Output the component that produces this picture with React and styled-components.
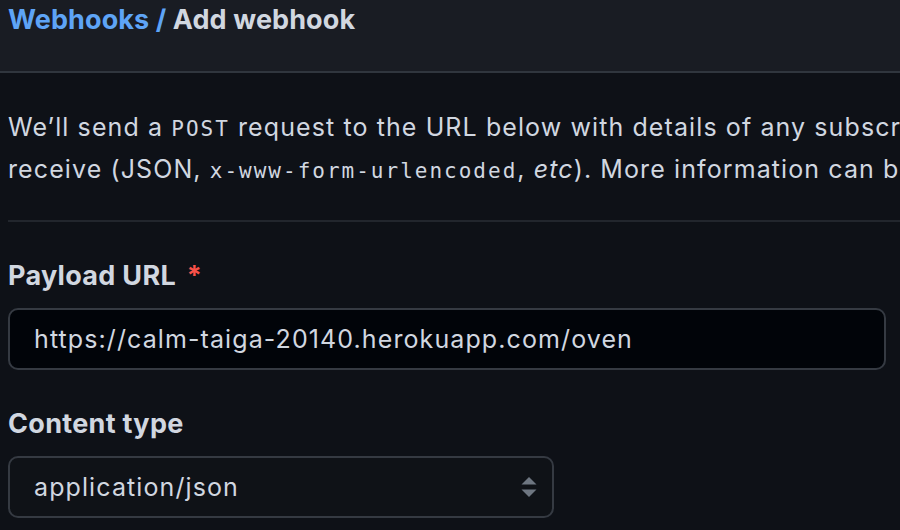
import styled, { createGlobalStyle } from "styled-components";

const GlobalStyle = createGlobalStyle`
    html, body {
        margin: 0;
        padding: 0;
        background-color: #0e1117;
        overflow: hidden;
    }
    body {
        width: 900px;
        height: 530px;
        font-family: Inter, "Liberation Sans", sans-serif;
        color: #d1d7e0;
    }
`;

export default function App() {
    return (
        <>
            <GlobalStyle />
            <Page>
                <Header>
                    <Title>
                        <Crumb>Webhooks /</Crumb> Add webhook
                    </Title>
                </Header>
                <Body>
                    <Intro>
                        We’ll send a <Code>POST</Code> request to the URL below with details of any subscribed events. You can also specify which data format you’d like to
                        <br />
                        receive (JSON, <Code>x-www-form-urlencoded</Code>, <em>etc</em>). More information can be found in our developer documentation.
                    </Intro>
                    <Divider />
                    <Field $top={37}>
                        <Label>
                            Payload URL <Required>*</Required>
                        </Label>
                        <TextInput readOnly value="https://calm-taiga-20140.herokuapp.com/oven" />
                    </Field>
                    <Field $top={37}>
                        <Label>Content type</Label>
                        <SelectBox>
                            <span>application/json</span>
                            <svg width="16" height="22" viewBox="0 0 16 22">
                                <path d="M8 0 L15.5 7.5 L0.5 7.5 Z" fill="#6e7681" />
                                <path d="M8 20 L15.5 12.5 L0.5 12.5 Z" fill="#6e7681" />
                            </svg>
                        </SelectBox>
                    </Field>
                </Body>
            </Page>
        </>
    );
}

const Page = styled.div`
    width: 900px;
    height: 530px;
    overflow: hidden;
`;

const Header = styled.div`
    height: 73px;
    background-color: #191c23;
    border-bottom: 2px solid #30363e;
    padding: 3px 8px 0 8px;
    box-sizing: border-box;
`;

const Title = styled.h1`
    margin: 0;
    font-size: 27px;
    line-height: 34px;
    font-weight: 700;
    letter-spacing: 0.1px;
    color: #d1d7e0;
    white-space: nowrap;
`;

const Crumb = styled.span`
    color: #5ea4f6;
`;

const Body = styled.div`
    padding: 34px 0 0 8px;
`;

const Intro = styled.p`
    margin: 0;
    font-size: 25px;
    line-height: 40px;
    letter-spacing: 1.1px;
    white-space: nowrap;
    color: #d1d7e0;
    em {
        font-style: italic;
    }
`;

const Code = styled.code`
    font-family: "DejaVu Sans Mono", "Liberation Mono", monospace;
    font-size: 21px;
    letter-spacing: 2px;
`;

const Divider = styled.hr`
    border: none;
    height: 2px;
    background-color: #22262d;
    margin: 29px 0 0 0;
`;

const Field = styled.div`
    display: flex;
    flex-direction: column;
    padding-top: ${(props) => props.$top}px;
`;

const Label = styled.label`
    font-size: 27px;
    line-height: 34px;
    font-weight: 700;
    letter-spacing: 0.3px;
    color: #d1d7e0;
    margin-bottom: 15px;
`;

const Required = styled.span`
    color: #f85149;
    margin-left: 4px;
`;

const TextInput = styled.input`
    width: 878px;
    height: 62px;
    box-sizing: border-box;
    background-color: #010409;
    border: 2px solid #353a42;
    border-radius: 10px;
    padding: 0 24px;
    font-family: Inter, "Liberation Sans", sans-serif;
    font-size: 25px;
    letter-spacing: 1.1px;
    color: #d1d7e0;
    outline: none;
`;

const SelectBox = styled.div`
    width: 546px;
    height: 62px;
    box-sizing: border-box;
    display: flex;
    align-items: center;
    justify-content: space-between;
    background-color: #0f1217;
    border: 2px solid #353a42;
    border-radius: 10px;
    padding: 0 15px 0 24px;
    font-size: 25px;
    letter-spacing: 1.1px;
    color: #d1d7e0;
    svg {
        margin-top: 2px;
    }
`;
